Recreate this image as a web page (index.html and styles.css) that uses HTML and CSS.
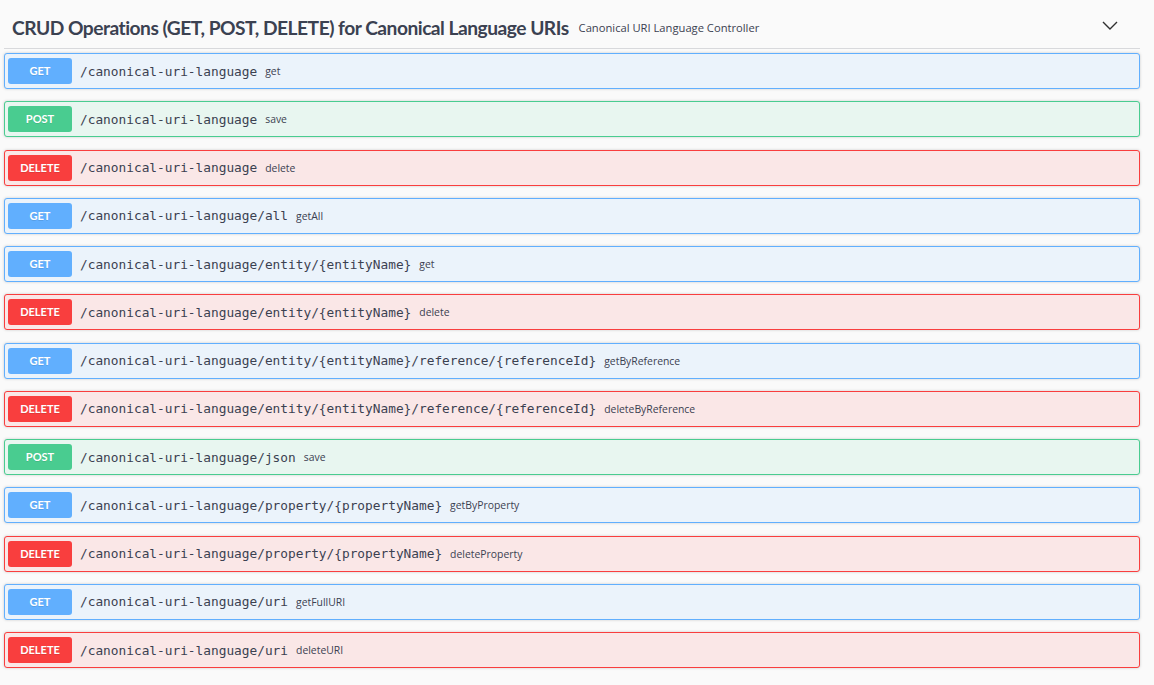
FILE: index.html
```html
<!DOCTYPE html>
<html lang="en">
<head>
<meta charset="utf-8">
<title>Canonical URI Language Controller</title>
<link rel="stylesheet" href="styles.css">
</head>
<body>
<div class="wrap">
  <div class="tag">
    <h3 class="tag-title">CRUD Operations (GET, POST, DELETE) for Canonical Language URIs</h3>
    <span class="tag-desc">Canonical URI Language Controller</span>
    <svg class="arrow" width="16" height="9" viewBox="0 0 16 9"><polyline points="1,1 8,8 15,1" fill="none" stroke="#303030" stroke-width="1.4"/></svg>
  </div>
  <div class="ops">
    <div class="op get"><span class="method">GET</span><span class="path">/canonical-uri-language</span><span class="desc">get</span></div>
    <div class="op post"><span class="method">POST</span><span class="path">/canonical-uri-language</span><span class="desc">save</span></div>
    <div class="op delete"><span class="method">DELETE</span><span class="path">/canonical-uri-language</span><span class="desc">delete</span></div>
    <div class="op get"><span class="method">GET</span><span class="path">/canonical-uri-language/all</span><span class="desc">getAll</span></div>
    <div class="op get"><span class="method">GET</span><span class="path">/canonical-uri-language/entity/{entityName}</span><span class="desc">get</span></div>
    <div class="op delete"><span class="method">DELETE</span><span class="path">/canonical-uri-language/entity/{entityName}</span><span class="desc">delete</span></div>
    <div class="op get"><span class="method">GET</span><span class="path">/canonical-uri-language/entity/{entityName}/reference/{referenceId}</span><span class="desc">getByReference</span></div>
    <div class="op delete"><span class="method">DELETE</span><span class="path">/canonical-uri-language/entity/{entityName}/reference/{referenceId}</span><span class="desc">deleteByReference</span></div>
    <div class="op post"><span class="method">POST</span><span class="path">/canonical-uri-language/json</span><span class="desc">save</span></div>
    <div class="op get"><span class="method">GET</span><span class="path">/canonical-uri-language/property/{propertyName}</span><span class="desc">getByProperty</span></div>
    <div class="op delete"><span class="method">DELETE</span><span class="path">/canonical-uri-language/property/{propertyName}</span><span class="desc">deleteProperty</span></div>
    <div class="op get"><span class="method">GET</span><span class="path">/canonical-uri-language/uri</span><span class="desc">getFullURI</span></div>
    <div class="op delete"><span class="method">DELETE</span><span class="path">/canonical-uri-language/uri</span><span class="desc">deleteURI</span></div>
  </div>
</div>
</body>
</html>
```
FILE: styles.css
```css
html, body {
  margin: 0;
  padding: 0;
  background: #fafafa;
}
body {
  font-family: "Open Sans", "Noto Sans", sans-serif;
  color: #3b4151;
}
.wrap {
  padding: 0 14px 0 4px;
}
.tag {
  display: flex;
  align-items: center;
  height: 49px;
  box-sizing: border-box;
  padding: 6px 0 0 8px;
  border-bottom: 1px solid #d8d9dc;
  margin-bottom: 4px;
}
.tag-title {
  margin: 0;
  font-family: Lato, "Open Sans", sans-serif;
  font-weight: 700;
  font-size: 19.2px;
  letter-spacing: -0.5px;
  color: #3b4151;
  white-space: nowrap;
}
.tag-desc {
  flex: 1;
  padding: 0 10px;
  font-size: 11.2px;
  color: #3b4151;
}
.arrow {
  margin-right: 22px;
  margin-top: -3px;
}
.op {
  display: flex;
  align-items: center;
  padding: 4px 3px;
  margin-bottom: 12.25px;
  border: 1px solid;
  border-radius: 3px;
  box-shadow: 0 0 3px rgba(0,0,0,.19);
}
.method {
  width: 64px;
  height: 26px;
  line-height: 26px;
  text-align: center;
  border-radius: 3px;
  color: #fff;
  font-family: Lato, "Open Sans", sans-serif;
  font-weight: 700;
  font-size: 11px;
  text-shadow: 0 1px 0 rgba(0,0,0,.1);
  flex: none;
}
.path {
  padding: 0 8px;
  font-family: "DejaVu Sans Mono", "Liberation Mono", monospace;
  font-size: 12.8px;
  color: #3b4151;
  white-space: nowrap;
}
.desc {
  flex: 1;
  font-size: 10.4px;
  color: #3b4151;
}
.get { background: #ebf3fb; border-color: #61affe; }
.get .method { background: #61affe; }
.post { background: #e8f6f0; border-color: #49cc90; }
.post .method { background: #49cc90; }
.delete { background: #fae7e7; border-color: #f93e3e; }
.delete .method { background: #f93e3e; }
```
